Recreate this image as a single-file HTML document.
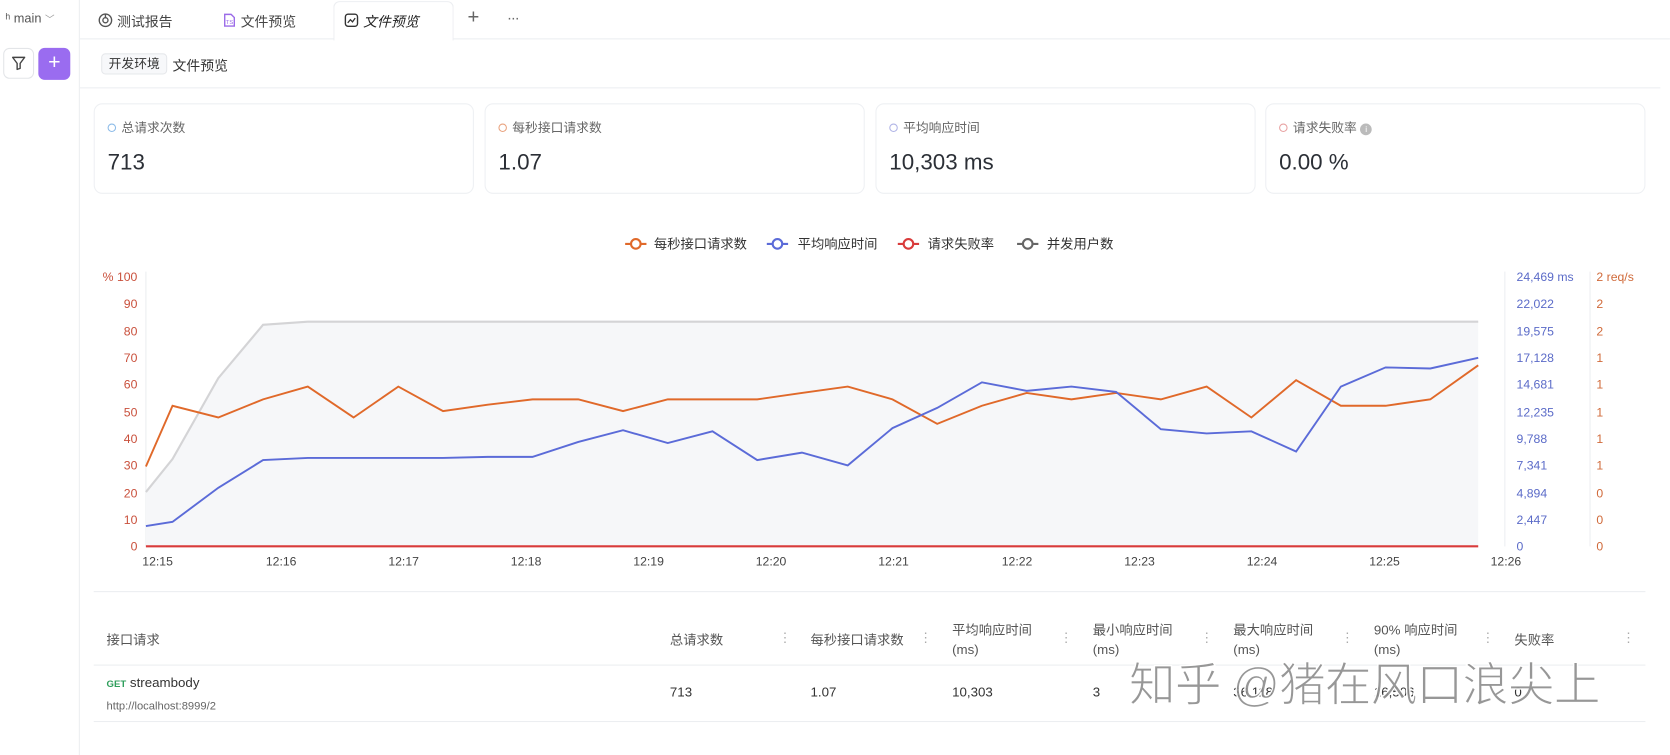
<!DOCTYPE html>
<html><head><meta charset="utf-8"><style>
*{margin:0;padding:0;box-sizing:border-box}
html,body{width:1670px;height:755px;overflow:hidden;background:#fff}
body{font-family:"Liberation Sans","Noto Sans CJK SC",sans-serif;color:#333}
#w{position:absolute;left:0;top:0;width:1568px;height:709px;transform:scale(1.065);transform-origin:0 0}
.a{position:absolute;white-space:nowrap}
.card{position:absolute;top:97px;height:85px;width:357px;border:1px solid #eef0f3;border-radius:8px;background:#fff}
.card .l{position:absolute;left:12px;top:13px;font-size:12px;color:#666}
.card .l i{display:inline-block;width:8px;height:8px;border-radius:50%;border:1px solid;margin-right:5px;vertical-align:-0px}
.card .v{position:absolute;left:12px;top:43px;font-size:21px;color:#2b2f36}
.th{position:absolute;font-size:12.5px;color:#555;line-height:18px}
.dot{position:absolute;color:#aaa;font-size:12px}
.td{position:absolute;font-size:12.5px;color:#333;top:643px}
</style></head><body><div id="w">
<div class="a" style="left:74px;top:0;width:1px;height:709px;background:#eceef1"></div>
<div class="a" style="left:5px;top:10px;font-size:12px;color:#555">ʰ main <span style="font-size:9px;color:#999">﹀</span></div>
<div class="a" style="left:3px;top:45px;width:29px;height:29px;border:1px solid #e3e5e8;border-radius:6px"></div>
<svg class="a" style="left:10px;top:52px" width="15" height="15" viewBox="0 0 16 16"><path d="M2 2h12L9.5 8v5L6.5 14V8z" fill="none" stroke="#444" stroke-width="1.4" stroke-linejoin="round"/></svg>
<div class="a" style="left:36px;top:45px;width:30px;height:30px;background:#9a6cf0;border-radius:6px;color:#fff;font-size:20px;text-align:center;line-height:29px">+</div>
<div class="a" style="left:75px;top:0;width:1493px;height:37px;border-bottom:1px solid #eceef1"></div>
<svg class="a" style="left:92px;top:12px" width="14" height="14" viewBox="0 0 14 14"><circle cx="7" cy="7" r="5.8" fill="none" stroke="#555" stroke-width="1.3"/><circle cx="7" cy="7" r="2.4" fill="none" stroke="#555" stroke-width="1.3"/><path d="M7 1.2V4.6" stroke="#555" stroke-width="1.3"/></svg>
<div class="a" style="left:110px;top:10px;font-size:13px;color:#444">测试报告</div>
<svg class="a" style="left:208px;top:12px" width="14" height="14" viewBox="0 0 14 14"><path d="M3 1.5h6l3 3v8H3z" fill="none" stroke="#9b6be8" stroke-width="1.3"/><text x="4" y="10.5" font-size="5.5" fill="#9b6be8" font-family="Liberation Sans">TS</text></svg>
<div class="a" style="left:226px;top:10px;font-size:13px;color:#444">文件预览</div>
<div class="a" style="left:313px;top:1px;width:113px;height:37px;background:#fff;border:1px solid #eceef1;border-bottom:none;border-radius:6px 6px 0 0"></div>
<svg class="a" style="left:323px;top:12px" width="14" height="14" viewBox="0 0 14 14"><rect x="1.3" y="1.3" width="11.4" height="11.4" rx="2.5" fill="none" stroke="#333" stroke-width="1.3"/><path d="M3.5 9.5l2.5-3 2 2 2.5-3.5" fill="none" stroke="#333" stroke-width="1.2"/></svg>
<div class="a" style="left:341px;top:10px;font-size:13px;color:#222;font-style:italic">文件预览</div>
<div class="a" style="left:439px;top:6px;font-size:19px;color:#666;font-weight:300">+</div>
<div class="a" style="left:476px;top:8px;font-size:14px;color:#666;letter-spacing:-1px">···</div>
<div class="a" style="left:95px;top:50px;height:20px;padding:0 6px;border:1px solid #e6e8eb;border-radius:4px;background:#f7f8fa;font-size:12px;line-height:18px;color:#333">开发环境</div>
<div class="a" style="left:162px;top:51px;font-size:13px;color:#333">文件预览</div>
<div class="a" style="left:75px;top:82px;width:1484px;height:1px;background:#eceef1"></div>
<div class="card" style="left:88px"><div class="l"><i style="border-color:#8cbbe8"></i>总请求次数</div><div class="v">713</div></div>
<div class="card" style="left:455px"><div class="l"><i style="border-color:#e9a37f"></i>每秒接口请求数</div><div class="v">1.07</div></div>
<div class="card" style="left:822px"><div class="l"><i style="border-color:#b0b4e6"></i>平均响应时间</div><div class="v">10,303 ms</div></div>
<div class="card" style="left:1188px"><div class="l"><i style="border-color:#e8a2a2"></i>请求失败率 <span style="display:inline-block;width:11px;height:11px;border-radius:50%;background:#bbb;color:#fff;font-size:8px;text-align:center;line-height:11px;vertical-align:0">i</span></div><div class="v">0.00 %</div></div>
<svg class="a" style="left:0;top:200px" width="1568" height="345" viewBox="0 200 1568 345" font-family="Liberation Sans,Noto Sans CJK SC,sans-serif">
<g font-size="12.5" fill="#333">
<path d="M587 229h20" stroke="#e0692a" stroke-width="2"/><circle cx="597" cy="229" r="4.5" fill="#fff" stroke="#e0692a" stroke-width="2"/><text x="614" y="233.5">每秒接口请求数</text>
<path d="M720 229h20" stroke="#5b6bd8" stroke-width="2"/><circle cx="730" cy="229" r="4.5" fill="#fff" stroke="#5b6bd8" stroke-width="2"/><text x="749" y="233.5">平均响应时间</text>
<path d="M843 229h20" stroke="#d93b3b" stroke-width="2"/><circle cx="853" cy="229" r="4.5" fill="#fff" stroke="#d93b3b" stroke-width="2"/><text x="871" y="233.5">请求失败率</text>
<path d="M955 229h20" stroke="#666" stroke-width="2"/><circle cx="965" cy="229" r="4.5" fill="#fff" stroke="#666" stroke-width="2"/><text x="983" y="233.5">并发用户数</text>
</g>
<path d="M137 255V513M1413 255V513M1493 255V513" stroke="#eceef1" stroke-width="1"/>
<g font-size="11.5" fill="#c9503c" text-anchor="end">
<text x="129" y="264">% 100</text><text x="129" y="289">90</text><text x="129" y="315">80</text><text x="129" y="340">70</text><text x="129" y="365">60</text><text x="129" y="391">50</text><text x="129" y="416">40</text><text x="129" y="441">30</text><text x="129" y="467">20</text><text x="129" y="492">10</text><text x="129" y="517">0</text>
</g>
<g font-size="11.5" fill="#5b6bc8">
<text x="1424" y="264">24,469 ms</text><text x="1424" y="289">22,022</text><text x="1424" y="315">19,575</text><text x="1424" y="340">17,128</text><text x="1424" y="365">14,681</text><text x="1424" y="391">12,235</text><text x="1424" y="416">9,788</text><text x="1424" y="441">7,341</text><text x="1424" y="467">4,894</text><text x="1424" y="492">2,447</text><text x="1424" y="517">0</text>
</g>
<g font-size="11.5" fill="#d06a3a">
<text x="1499" y="264">2 req/s</text><text x="1499" y="289">2</text><text x="1499" y="315">2</text><text x="1499" y="340">1</text><text x="1499" y="365">1</text><text x="1499" y="391">1</text><text x="1499" y="416">1</text><text x="1499" y="441">1</text><text x="1499" y="467">0</text><text x="1499" y="492">0</text><text x="1499" y="517">0</text>
</g>
<path d="M137 462L162 431L205 355L247 305L289 302L1388 302V513H137Z" fill="#f6f7f9"/>
<path d="M137 462L162 431L205 355L247 305L289 302L1388 302" fill="none" stroke="#d4d4d6" stroke-width="2"/>
<path d="M137 438L162 381L205 392L247 375L289 363L332 392L374 363L416 386L458 380L500 375L543 375L585 386L627 375L669 375L711 375L753 369L796 363L838 375L880 398L922 381L964 369L1006 375L1048 369L1090 375L1133 363L1175 392L1217 357L1259 381L1301 381L1343 375L1388 343" fill="none" stroke="#e0692a" stroke-width="1.8"/>
<path d="M137 494L162 490L205 458L247 432L289 430L332 430L374 430L416 430L458 429L500 429L543 415L585 404L627 416L669 405L711 432L753 425L796 437L838 402L880 383L922 359L964 367L1006 363L1048 368L1090 403L1133 407L1175 405L1217 424L1259 363L1301 345L1343 346L1388 336" fill="none" stroke="#5b6bd8" stroke-width="1.8"/>
<path d="M137 513H1388" stroke="#d93b3b" stroke-width="2"/>
<g font-size="11.5" fill="#444" text-anchor="middle">
<text x="148" y="531">12:15</text><text x="264" y="531">12:16</text><text x="379" y="531">12:17</text><text x="494" y="531">12:18</text><text x="609" y="531">12:19</text><text x="724" y="531">12:20</text><text x="839" y="531">12:21</text><text x="955" y="531">12:22</text><text x="1070" y="531">12:23</text><text x="1185" y="531">12:24</text><text x="1300" y="531">12:25</text><text x="1414" y="531">12:26</text>
</g>
</svg>
<div class="a" style="left:88px;top:555px;width:1457px;height:1px;background:#eceef1"></div>
<div class="th" style="left:100px;top:592px">接口请求</div>
<div class="th" style="left:629px;top:592px">总请求数</div>
<div class="th" style="left:761px;top:592px">每秒接口请求数</div>
<div class="th" style="left:894px;top:583px">平均响应时间<br>(ms)</div>
<div class="th" style="left:1026px;top:583px">最小响应时间<br>(ms)</div>
<div class="th" style="left:1158px;top:583px">最大响应时间<br>(ms)</div>
<div class="th" style="left:1290px;top:583px">90% 响应时间<br>(ms)</div>
<div class="th" style="left:1422px;top:592px">失败率</div>
<div class="dot" style="left:731px;top:592px">⋮</div><div class="dot" style="left:863px;top:592px">⋮</div><div class="dot" style="left:995px;top:592px">⋮</div><div class="dot" style="left:1127px;top:592px">⋮</div><div class="dot" style="left:1259px;top:592px">⋮</div><div class="dot" style="left:1391px;top:592px">⋮</div><div class="dot" style="left:1523px;top:592px">⋮</div>
<div class="a" style="left:88px;top:624px;width:1457px;height:1px;background:#eceef1"></div>
<div class="a" style="left:100px;top:634px;font-size:12.5px;color:#333"><span style="color:#2e9e5b;font-size:9px;font-weight:bold">GET</span> streambody</div>
<div class="a" style="left:100px;top:657px;font-size:10.5px;color:#666">http://localhost:8999/2</div>
<div class="td" style="left:629px">713</div><div class="td" style="left:761px">1.07</div><div class="td" style="left:894px">10,303</div><div class="td" style="left:1026px">3</div><div class="td" style="left:1158px">36,118</div><div class="td" style="left:1290px">16,506</div><div class="td" style="left:1422px">0</div>
<div class="a" style="left:88px;top:677px;width:1457px;height:1px;background:#eceef1"></div>
<div class="a" style="left:1060px;top:618px;font-size:44px;line-height:52px;color:rgba(140,140,140,.9);-webkit-text-stroke:1.2px #fff;letter-spacing:-1px">知乎 @猪在风口浪尖上</div>
</div></body></html>
